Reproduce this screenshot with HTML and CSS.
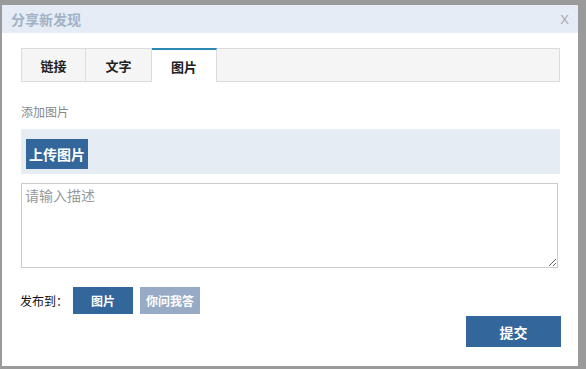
FILE: index.html
```html
<!DOCTYPE html>
<html lang="zh-CN">
<head>
    <meta charset="UTF-8">
    <title>分享新发现</title>
    <link rel="stylesheet" href="styles.css">
</head>
<body>
    <div class="dialog">
        <div class="dialog-header">
            <span class="dialog-title">分享新发现</span>
            <span class="dialog-close">X</span>
        </div>
        <div class="dialog-body">
            <div class="tabs">
                <div class="tab">链接</div>
                <div class="tab">文字</div>
                <div class="tab active">图片</div>
            </div>

            <div class="field-label">添加图片</div>
            <div class="upload-box">
                <button class="upload-btn">上传图片</button>
            </div>

            <textarea class="desc" placeholder="请输入描述"></textarea>

            <div class="publish-row">
                <span class="publish-label">发布到：</span>
                <button class="target-btn">图片</button>
                <button class="target-btn muted">你问我答</button>
            </div>

            <div class="submit-row">
                <button class="submit-btn">提交</button>
            </div>
        </div>
    </div>
</body>
</html>
```

FILE: styles.css
```css
body {
    margin: 0;
    padding: 5px 8px 3px 2px;
    background-color: #9a9a9a;
    font-family: "Noto Sans CJK SC", "Liberation Sans", sans-serif;
}
.dialog {
    background-color: #fff;
    height: 361px;
    box-sizing: border-box;
}
.dialog-header {
    height: 28px;
    padding: 0 9px 0 9px;
    background-color: #e5ecf5;
    display: flex;
    align-items: center;
    justify-content: space-between;
}
.dialog-title {
    font-size: 14px;
    font-weight: bold;
    color: #a2b2c7;
}
.dialog-close {
    font-family: "Liberation Sans", sans-serif;
    font-size: 13px;
    color: #a8a8a8;
}
.dialog-body {
    padding: 15px 18px 0 19px;
}
.tabs {
    display: flex;
    height: 34px;
    box-sizing: border-box;
    border: 1px solid #dcdcdc;
    background-color: #f5f5f5;
}
.tab {
    width: 64px;
    box-sizing: border-box;
    display: flex;
    align-items: center;
    justify-content: center;
    font-size: 13px;
    font-weight: bold;
    color: #222;
    border-right: 1px solid #dcdcdc;
}
.tab:nth-child(2) {
    width: 66px;
}
.tab.active {
    width: 65px;
    background-color: #fff;
    border-top: 2px solid #2b87b4;
    margin-top: -1px;
    margin-bottom: -1px;
}
.field-label {
    margin-top: 22px;
    font-size: 12px;
    color: #888;
    line-height: 16px;
}
.upload-box {
    margin-top: 9px;
    height: 45px;
    box-sizing: border-box;
    padding: 10px 5px 0;
    background-color: #e6ecf4;
}
.upload-btn {
    height: 30px;
    width: 62px;
    padding: 0;
    border: none;
    background-color: #33669a;
    color: #fff;
    font-family: inherit;
    font-size: 14px;
    font-weight: bold;
}
.desc {
    display: block;
    margin-top: 9px;
    width: 537px;
    height: 85px;
    box-sizing: border-box;
    padding: 1px 3px;
    border: 1px solid #ccc;
    font-family: inherit;
    font-size: 14px;
    resize: vertical;
}
.desc::placeholder {
    color: #999;
}
.publish-row {
    margin-top: 19px;
    display: flex;
    align-items: center;
    height: 27px;
}
.publish-label {
    font-size: 12px;
    color: #111;
    margin-left: -1px;
    width: 53px;
}
.target-btn {
    width: 60px;
    height: 27px;
    margin-right: 7px;
    padding: 0;
    border: none;
    background-color: #33669a;
    color: #fff;
    font-family: inherit;
    font-size: 12px;
    font-weight: bold;
}
.target-btn.muted {
    background-color: #98abc6;
}
.submit-row {
    margin-top: 2px;
    margin-right: -1px;
    display: flex;
    justify-content: flex-end;
}
.submit-btn {
    width: 95px;
    height: 31px;
    padding: 0;
    border: none;
    background-color: #33669a;
    color: #fff;
    font-family: inherit;
    font-size: 14px;
    font-weight: bold;
}
```
